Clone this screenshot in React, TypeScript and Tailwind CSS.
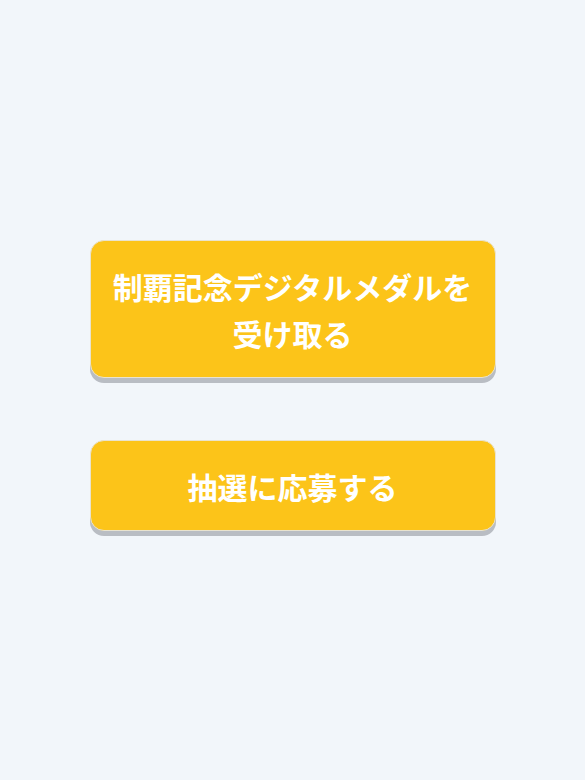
import React from "react";

const btn =
  "w-[406px] rounded-[14px] bg-[#fcc419] border border-[#e9e3cf] shadow-[0_5px_0_#b9bdc3] text-white font-bold text-[30px] leading-[47px] text-center tracking-[0px] px-5";

export default function App() {
  return (
    <div
      className="min-h-screen w-full bg-[#f2f6fa] flex flex-col items-center justify-center gap-[62px] pb-[10px]"
      style={{ fontFamily: '"Noto Sans CJK JP", "Noto Sans", sans-serif' }}
    >
      <button className={`${btn} pt-[22px] pb-[20px]`}>制覇記念デジタルメダルを受け取る</button>
      <button className={`${btn} pt-[22px] pb-[20px]`}>抽選に応募する</button>
    </div>
  );
}
